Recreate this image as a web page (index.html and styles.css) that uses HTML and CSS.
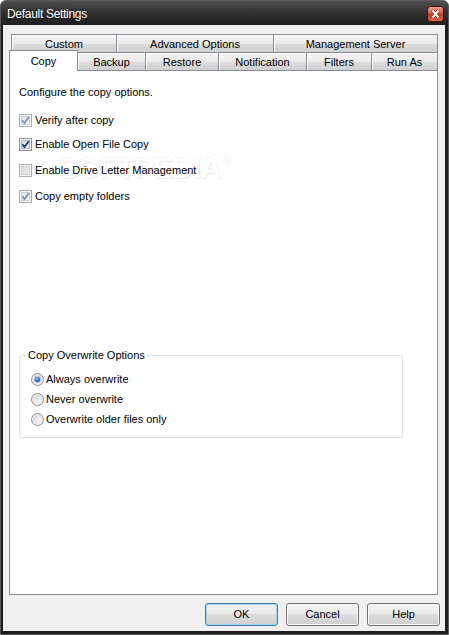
FILE: index.html
```html
<!DOCTYPE html>
<html>
<head>
<meta charset="utf-8">
<title>Default Settings</title>
<link rel="stylesheet" href="styles.css">
</head>
<body>
<div class="window">
  <div class="titlebar">
    <span class="title">Default Settings</span>
    <span class="close">
      <svg width="17" height="16" viewBox="0 0 17 16">
        <defs>
          <linearGradient id="cg" x1="0" y1="0" x2="0" y2="1">
            <stop offset="0" stop-color="#f0a596"/>
            <stop offset="0.45" stop-color="#d9593f"/>
            <stop offset="0.5" stop-color="#c23a1f"/>
            <stop offset="1" stop-color="#dd6c4c"/>
          </linearGradient>
        </defs>
        <rect x="0.5" y="0.5" width="16" height="15" rx="3" fill="url(#cg)" stroke="#3f1208"/>
        <path d="M5.5 4.5 L11.5 11.5 M11.5 4.5 L5.5 11.5" stroke="#6e1f10" stroke-width="3.4"/>
        <path d="M5.5 4.5 L11.5 11.5 M11.5 4.5 L5.5 11.5" stroke="#ffffff" stroke-width="2"/>
      </svg>
    </span>
  </div>
  <div class="client">
    <div class="tabs">
      <div class="tabrow row1">
        <div class="tab t-custom">Custom</div>
        <div class="tab t-adv">Advanced Options</div>
        <div class="tab t-mgmt">Management Server</div>
      </div>
      <div class="tabrow row2">
        <div class="tab sel t-copy">Copy</div>
        <div class="tab t-backup">Backup</div>
        <div class="tab t-restore">Restore</div>
        <div class="tab t-notif">Notification</div>
        <div class="tab t-filters">Filters</div>
        <div class="tab t-runas">Run As</div>
      </div>
      <div class="pane">
        <div class="watermark">SOFTPEDIA<span class="reg">®</span></div>
        <p class="desc">Configure the copy options.</p>
        <div class="checks">
          <div class="check r1"><span class="cb dis"><svg class="mark" width="11" height="11" viewBox="0 0 11 11"><path d="M2.3 5.3 L4.4 8 L8.8 2.2" fill="none" stroke="#7d8db4" stroke-width="1.8"/></svg></span><span>Verify after copy</span></div>
          <div class="check r2"><span class="cb"><svg class="mark" width="11" height="11" viewBox="0 0 11 11"><path d="M2.3 5.3 L4.4 8 L8.8 2.2" fill="none" stroke="#1c3583" stroke-width="1.8"/></svg></span><span>Enable Open File Copy</span></div>
          <div class="check r3"><span class="cb dis off"></span><span>Enable Drive Letter Management</span></div>
          <div class="check r3"><span class="cb dis"><svg class="mark" width="11" height="11" viewBox="0 0 11 11"><path d="M2.3 5.3 L4.4 8 L8.8 2.2" fill="none" stroke="#7d8db4" stroke-width="1.8"/></svg></span><span>Copy empty folders</span></div>
        </div>
        <div class="group">
          <span class="legend">Copy Overwrite Options</span>
          <div class="radios">
            <div class="radio"><span class="rb on"><span class="dot"></span></span><span>Always overwrite</span></div>
            <div class="radio"><span class="rb"></span><span>Never overwrite</span></div>
            <div class="radio"><span class="rb"></span><span>Overwrite older files only</span></div>
          </div>
        </div>
      </div>
    </div>
    <div class="buttons">
      <div class="btn default">OK</div>
      <div class="btn">Cancel</div>
      <div class="btn">Help</div>
    </div>
  </div>
</div>
</body>
</html>
```

FILE: styles.css
```css
html, body {
  margin: 0;
  padding: 0;
  background: #ffffff;
}

body {
  font-family: "Liberation Sans", Arial, sans-serif;
  font-size: 11px;
  color: #000;
}

.window {
  width: 449px;
  height: 635px;
  box-sizing: border-box;
  border: 1px solid #5a5a5a;
  border-radius: 6px 6px 0 0;
  padding: 0 3px 3px 2px;
  background: linear-gradient(#505050 0, #353535 10px, #1e1e1e 24px, #1e1e1e 100%);
  display: flex;
  flex-direction: column;
}

.titlebar {
  height: 24px;
  display: flex;
  justify-content: space-between;
  align-items: flex-start;
}

.title {
  color: #fff;
  font-size: 12px;
  letter-spacing: -0.3px;
  line-height: 14px;
  padding: 6px 0 0 4px;
  text-shadow: 0 0 3px rgba(0, 0, 0, 0.6);
}

.close {
  display: block;
  height: 16px;
  margin: 5px 1px 0 0;
}

.close svg {
  display: block;
}

.client {
  flex: 1;
  background: #f0f0f0;
  padding: 9px 0 0 6px;
  display: flex;
  flex-direction: column;
}

.tabs {
  width: 429px;
}

.tabrow {
  display: flex;
  height: 18px;
  padding-left: 2px;
}

.row2 {
  align-items: flex-end;
}

.tab {
  box-sizing: border-box;
  height: 18px;
  border: 1px solid #898c95;
  border-bottom: none;
  background: linear-gradient(#f3f3f3, #ebebeb 50%, #dddddd 50%, #cfcfcf);
  box-shadow: inset 1px 1px 0 #fcfcfc;
  display: flex;
  align-items: center;
  justify-content: center;
  margin-left: -1px;
  line-height: 13px;
  padding-top: 1px;
}

.tabrow .tab:first-child {
  margin-left: 0;
}

.tab.sel {
  height: 21px;
  margin-left: -2px;
  margin-bottom: -1px;
  background: #fff;
  box-shadow: none;
  position: relative;
  z-index: 3;
  padding-top: 0;
}

.tabrow .tab.sel:first-child {
  margin-left: -2px;
}

.t-custom { width: 106px; }
.t-adv { width: 158px; }
.t-mgmt { width: 165px; }
.t-copy { width: 69px; }
.t-backup { width: 69px; }
.t-restore { width: 74px; }
.t-notif { width: 89px; }
.t-filters { width: 66px; }
.t-runas { width: 67px; }

.pane {
  position: relative;
  z-index: 1;
  box-sizing: border-box;
  height: 525px;
  border: 1px solid #898c95;
  background: #fff;
  padding: 15px 9px 0 9px;
}

.watermark {
  position: absolute;
  left: 48px;
  top: 80px;
  font-size: 30px;
  font-weight: bold;
  letter-spacing: -1px;
  color: #ffffff;
  text-shadow: 1px 1px 1px rgba(0, 0, 0, 0.09), -1px -1px 1px rgba(0, 0, 0, 0.04);
  z-index: 0;
  pointer-events: none;
}

.watermark .reg {
  font-size: 11px;
  font-weight: normal;
  vertical-align: 14px;
  margin-left: 2px;
}

.desc {
  margin: 0;
  line-height: 13px;
  position: relative;
  z-index: 1;
}

.checks {
  position: relative;
  z-index: 1;
  margin-top: 15px;
}

.check {
  display: flex;
  align-items: center;
  height: 13px;
  line-height: 13px;
  gap: 3px;
}

.check.r2 {
  margin-top: 11px;
}

.check.r3 {
  margin-top: 13px;
}

.cb {
  box-sizing: border-box;
  width: 13px;
  height: 13px;
  border: 1px solid #8e8f8f;
  background: linear-gradient(135deg, #cdd1d6, #f8f8f8);
  box-shadow: inset 0 0 0 1px #f4f4f4, inset 0 0 0 2px #b3b8be;
  display: flex;
  align-items: center;
  justify-content: center;
  flex: none;
}

.cb.dis {
  border-color: #a9acb0;
  background: linear-gradient(135deg, #dfe2e5, #fafafa);
  box-shadow: inset 0 0 0 1px #f7f7f7, inset 0 0 0 2px #cfd2d6;
}

.cb.off {
  background: linear-gradient(135deg, #cfd1d3, #f4f4f4);
}

.mark {
  display: block;
}

.group {
  position: relative;
  z-index: 1;
  margin-top: 152px;
  width: 384px;
  box-sizing: border-box;
  border: 1px solid #d5dfe5;
  border-radius: 3px;
  padding: 0 0 11px 11px;
}

.legend {
  display: block;
  width: max-content;
  margin: -7px 0 0 -5px;
  padding: 0 2px;
  line-height: 13px;
  background: #fff;
}

.radios {
  margin-top: 11px;
  display: flex;
  flex-direction: column;
  gap: 7px;
}

.radio {
  display: flex;
  align-items: center;
  height: 13px;
  line-height: 13px;
  gap: 2px;
}

.rb {
  box-sizing: border-box;
  width: 13px;
  height: 13px;
  border-radius: 50%;
  border: 1px solid #8e8f8f;
  background: radial-gradient(circle at 65% 65%, #f6f6f6 0, #d6d8db 70%);
  box-shadow: inset 0 0 0 1px #f4f4f4;
  display: flex;
  align-items: center;
  justify-content: center;
  flex: none;
}

.rb .dot {
  width: 5px;
  height: 5px;
  border-radius: 50%;
  background: radial-gradient(circle at 40% 35%, #7ec4f5 0, #1a63c9 60%, #0c3a8c 100%);
  box-shadow: 0 0 1px 1px rgba(40, 90, 180, 0.35);
}

.buttons {
  display: flex;
  justify-content: flex-end;
  gap: 8px;
  margin-top: 8px;
  padding-right: 5px;
}

.btn {
  box-sizing: border-box;
  width: 73px;
  height: 23px;
  border: 1px solid #707070;
  border-radius: 3px;
  background: linear-gradient(#f2f2f2, #ebebeb 45%, #dddddd 50%, #cfcfcf);
  box-shadow: inset 0 0 0 1px #fbfbfb;
  display: flex;
  align-items: center;
  justify-content: center;
  line-height: 13px;
}

.btn.default {
  border-color: #3c7fb1;
  box-shadow: inset 0 0 0 1px #9fd4f5;
}
```
